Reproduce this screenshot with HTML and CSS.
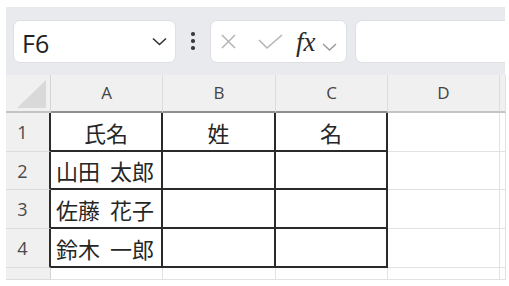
FILE: index.html
```html
<!DOCTYPE html>
<html lang="ja">
<head>
  <meta charset="UTF-8">
  <meta name="viewport" content="width=device-width, initial-scale=1.0">
  <title>氏名の分割</title>
  <link rel="stylesheet" href="styles.css">
</head>
<body>

  <div class="app">
    <div class="toolbar">
      <div class="namebox">
        <span class="ref">F6</span>
        <svg class="chev" width="15" height="9" viewBox="0 0 15 9"><path d="M1 1.5 L7.5 7.5 L14 1.5" fill="none" stroke="#333" stroke-width="1.6"/></svg>
      </div>
      <div class="dots"><i></i><i></i><i></i></div>
      <div class="fbox">
        <svg class="ico-x" width="15" height="15" viewBox="0 0 15 15"><path d="M1 1 L14 14 M14 1 L1 14" fill="none" stroke="#b4b4b4" stroke-width="1.5"/></svg>
        <svg class="ico-ok" width="25" height="15" viewBox="0 0 25 15"><path d="M1 6 L9 14 L24 1" fill="none" stroke="#b4b4b4" stroke-width="1.5"/></svg>
        <span class="fx">fx</span>
        <svg class="chev-s" width="15" height="8" viewBox="0 0 15 8"><path d="M1 1 L7.5 7 L14 1" fill="none" stroke="#999" stroke-width="1.4"/></svg>
      </div>
      <div class="finput"></div>
    </div>

    <div class="sheet">
      <div class="corner"><span class="tri"></span></div>
      <div class="hd dk">A</div>
      <div class="hd dk">B</div>
      <div class="hd dk">C</div>
      <div class="hd">D</div>
      <div class="hd end"></div>

      <div class="rn dk">1</div>
      <div class="c b mid">氏名</div>
      <div class="c b mid">姓</div>
      <div class="c b mid">名</div>
      <div class="c"></div>
      <div class="c end"></div>

      <div class="rn dk">2</div>
      <div class="c b">山田 太郎</div>
      <div class="c b"></div>
      <div class="c b"></div>
      <div class="c"></div>
      <div class="c end"></div>

      <div class="rn dk">3</div>
      <div class="c b">佐藤 花子</div>
      <div class="c b"></div>
      <div class="c b"></div>
      <div class="c"></div>
      <div class="c end"></div>

      <div class="rn dk">4</div>
      <div class="c b">鈴木 一郎</div>
      <div class="c b"></div>
      <div class="c b"></div>
      <div class="c"></div>
      <div class="c end"></div>

      <div class="rn"></div>
      <div class="c"></div>
      <div class="c"></div>
      <div class="c"></div>
      <div class="c"></div>
      <div class="c end"></div>
    </div>
  </div>

</body>
</html>
```

FILE: styles.css
```css
body {
  margin: 0;
  background: #fff;
  font-family: "Noto Sans", "Noto Sans CJK JP", sans-serif;
}

.app {
  margin: 7px 4px 0 6px;
}

.toolbar {
  display: flex;
  align-items: center;
  height: 68px;
  padding-left: 7px;
  background: #e8eaed;
}

.namebox {
  display: flex;
  align-items: center;
  justify-content: space-between;
  box-sizing: border-box;
  width: 163px;
  height: 43px;
  padding: 0 8px 0 8px;
  background: #fff;
  border: 1px solid #dde0e3;
  border-radius: 7px;
}

.ref {
  font-family: "Open Sans", sans-serif;
  font-size: 25px;
  color: #222;
  line-height: 1;
  position: relative;
  top: 2px;
}

.dots {
  display: flex;
  flex-direction: column;
  align-items: center;
  gap: 3.5px;
  width: 34px;
}

.dots i {
  width: 3.5px;
  height: 3.5px;
  border-radius: 50%;
  background: #3c3c3c;
}

.fbox {
  display: flex;
  align-items: center;
  box-sizing: border-box;
  width: 137px;
  height: 43px;
  padding-left: 10px;
  background: #fff;
  border: 1px solid #dde0e3;
  border-radius: 7px;
  margin-right: 8px;
}

.ico-ok {
  margin-left: 22px;
}

.fx {
  margin-left: 13px;
  font-family: "Liberation Serif", serif;
  font-style: italic;
  font-size: 27px;
  color: #2a2a2a;
  line-height: 1;
  position: relative;
  top: 1px;
}

.chev-s {
  margin-left: 6px;
  position: relative;
  top: 6px;
}

.finput {
  flex: 1;
  height: 43px;
  box-sizing: border-box;
  background: #fff;
  border: 1px solid #dde0e3;
  border-right: none;
  border-radius: 7px 0 0 7px;
}

.sheet {
  display: grid;
  grid-template-columns: 45px 112px 113px 112px 112px 1fr;
  grid-template-rows: 38px 39px 38px 39px 39px 12px;
}

.sheet > div {
  box-sizing: border-box;
  display: flex;
  align-items: center;
}

.corner {
  background: #f0f0f0;
  border-right: 1px solid #d4d4d4;
  border-bottom: 2px solid #c4c4c4;
  padding: 5px 4px 3px 11px;
}

.tri {
  width: 30px;
  height: 28px;
  background: #d9d9d9;
  clip-path: polygon(100% 0, 100% 100%, 0 100%);
}

.hd {
  justify-content: center;
  background: #f0f0f0;
  border-right: 1px solid #dcdcdc;
  border-bottom: 2px solid #c4c4c4;
  font-family: "Open Sans", sans-serif;
  font-size: 17px;
  color: #444;
  padding-bottom: 2px;
}

.hd.dk {
  border-bottom-color: #8e8e8e;
}

.rn {
  justify-content: center;
  padding-right: 10px;
  background: #f0f0f0;
  border-right: 1px solid #d4d4d4;
  border-bottom: 1px solid #dcdcdc;
  font-family: "Open Sans", sans-serif;
  font-size: 18px;
  color: #4a4a4a;
}

.rn.dk {
  border-right: 2px solid #2c2c2c;
}

.c {
  padding-left: 5px;
  border-right: 1px solid #e2e2e2;
  border-bottom: 1px solid #e2e2e2;
  font-family: "Noto Sans CJK JP", sans-serif;
  font-size: 22px;
  word-spacing: 5px;
  color: #262626;
  white-space: nowrap;
}

.c.b {
  border-right: 2px solid #2a2a2a;
  border-bottom: 2px solid #2a2a2a;
}

.c.mid {
  justify-content: center;
  padding-left: 0;
}

.end {
  border-right: 1px solid #e2e2e2;
  margin-right: 2px;
}
```
